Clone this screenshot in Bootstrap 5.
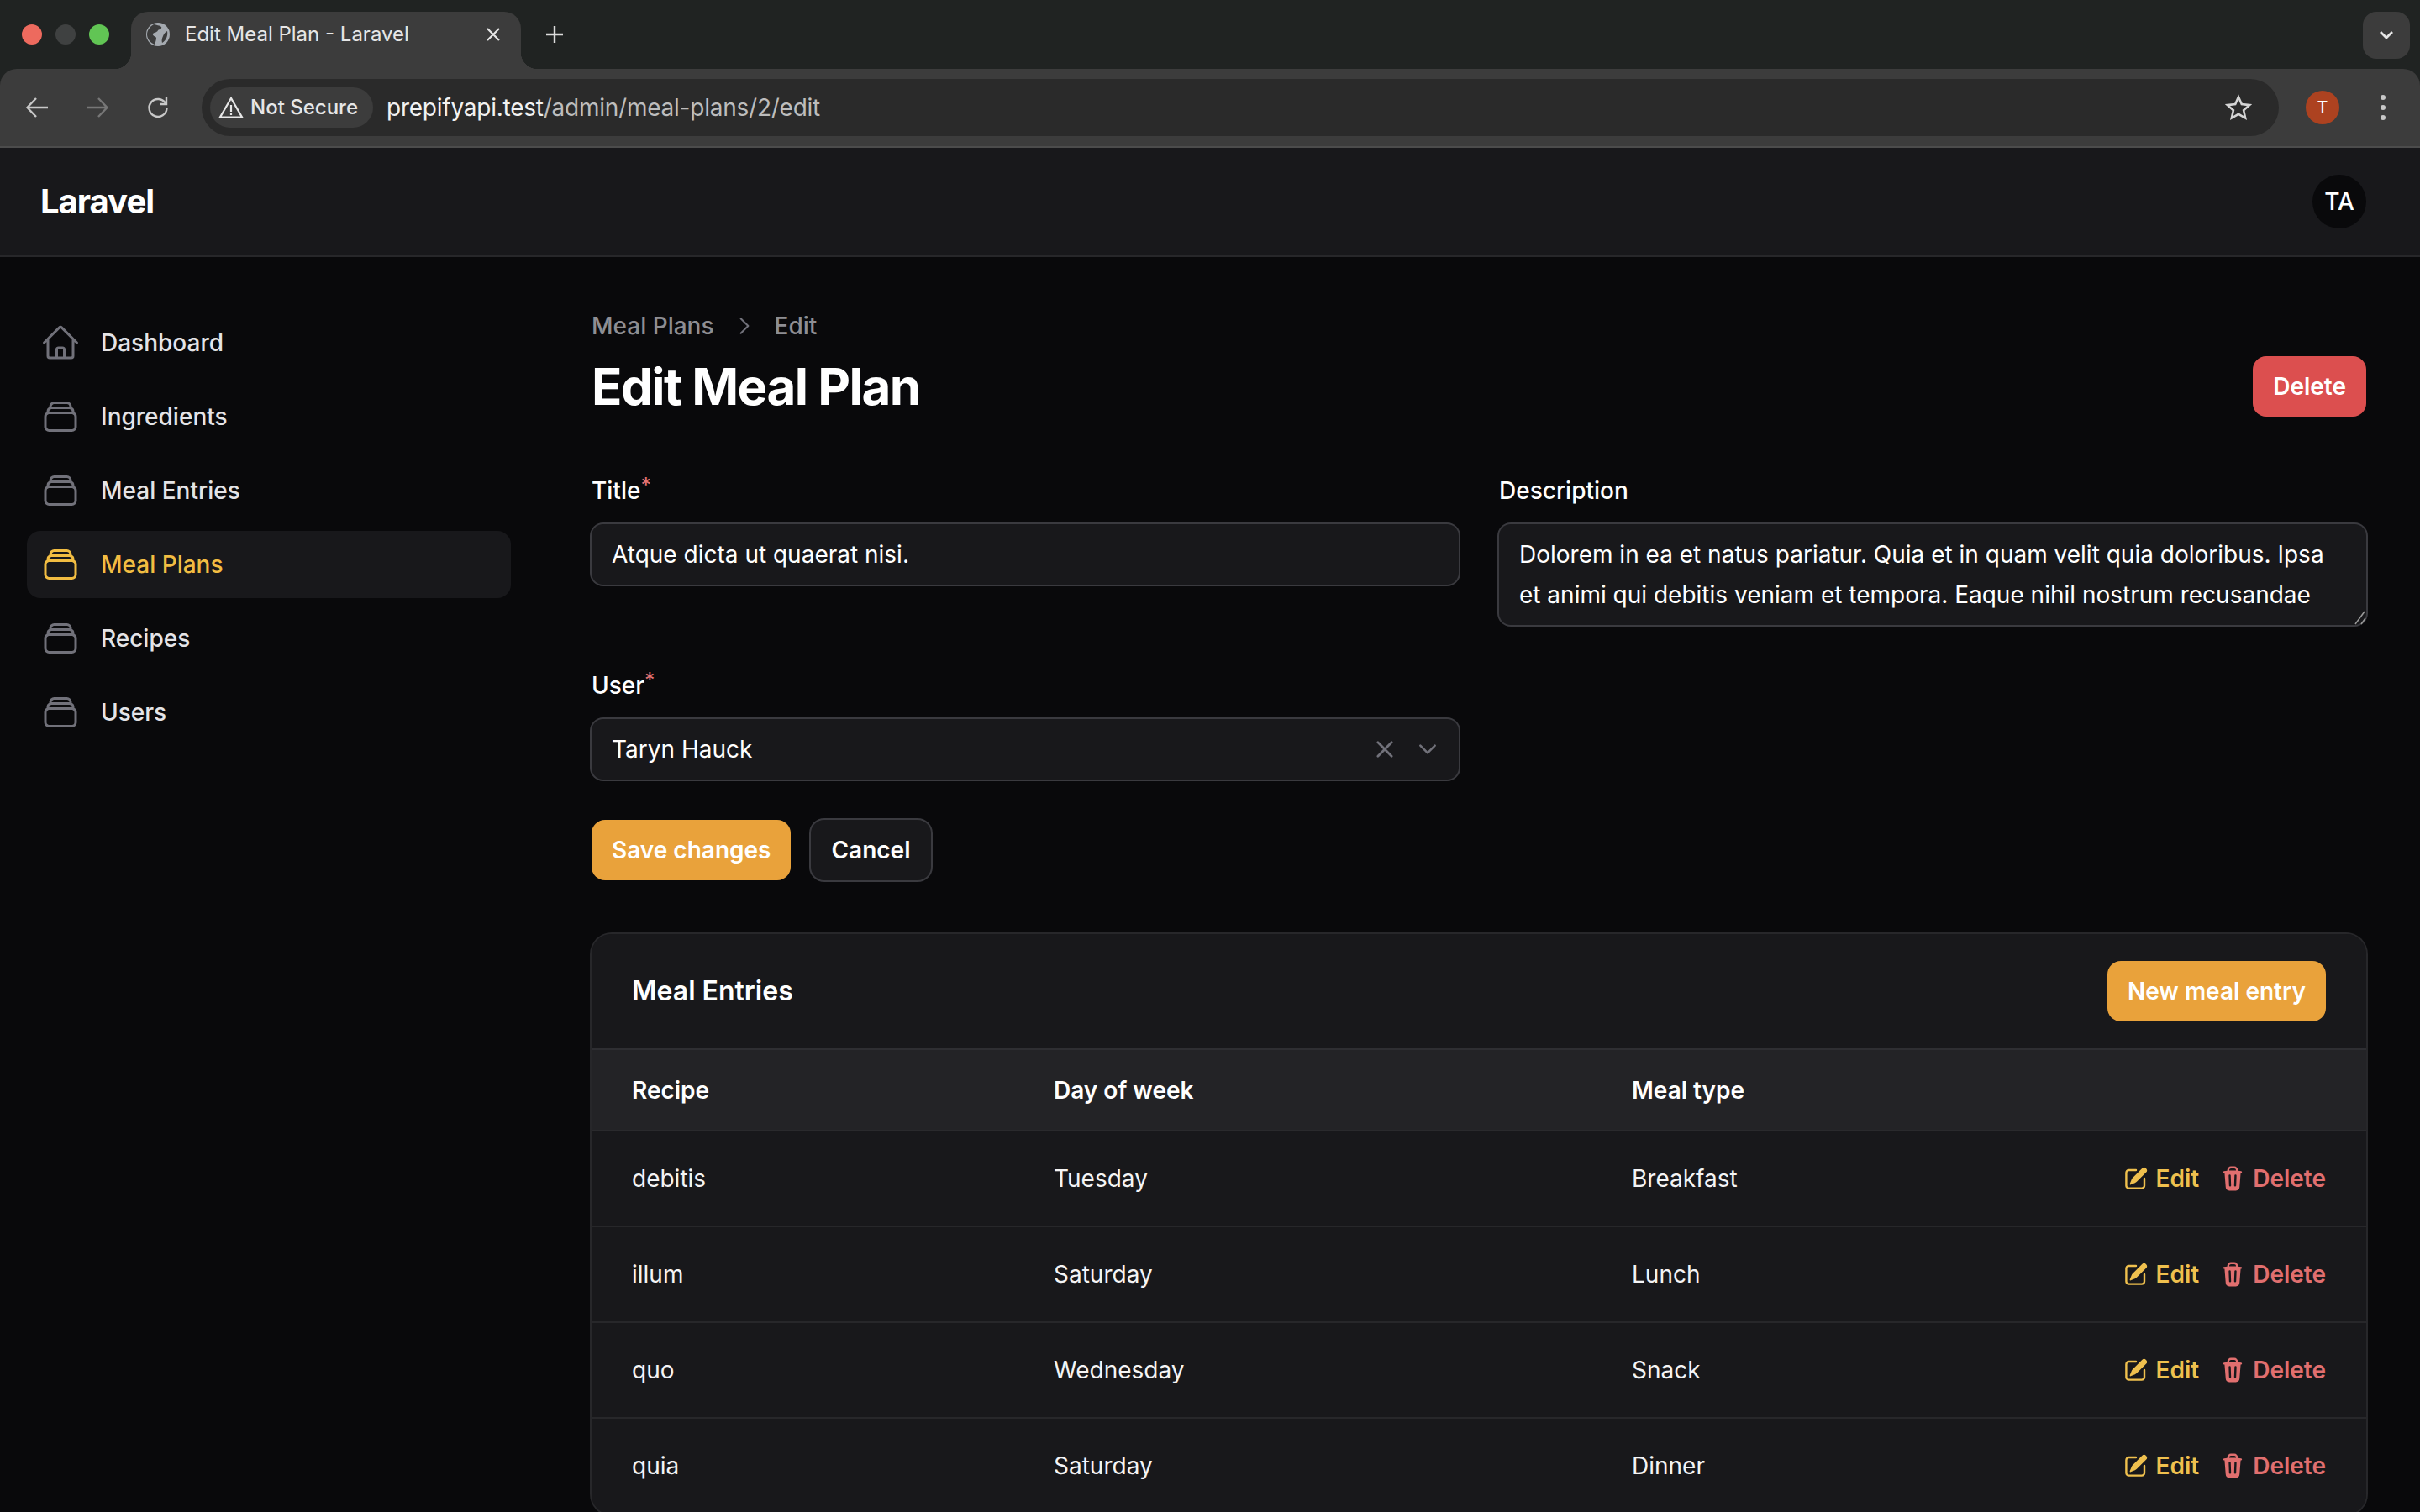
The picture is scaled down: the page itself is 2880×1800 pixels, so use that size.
<!DOCTYPE html>
<html lang="en" data-bs-theme="dark">
<head>
    <meta charset="UTF-8">
    <meta name="viewport" content="width=device-width, initial-scale=1.0">
    <title>Edit Meal Plan - Laravel</title>
    <link href="https://cdn.jsdelivr.net/npm/bootstrap@5.3.0/dist/css/bootstrap.min.css" rel="stylesheet">
    <style>
        html, body { height: 1800px; overflow: hidden; }
        body { background: #09090b; color: #fff; font-family: Inter, "Liberation Sans", sans-serif; font-size: 28px; line-height: 40px; color-scheme: dark; }

        /* browser chrome */
        .tab-strip { height: 82px; background: #202322; padding-left: 156px; }
        .win-lights { gap: 16px; left: 26px; top: 29px; }
        .win-dot { width: 24px; height: 24px; border-radius: 50%; }
        .browser-tab { width: 464px; height: 68px; margin-top: 14px; background: #3c3c3c; border-radius: 20px 20px 0 0; padding: 0 24px 14px 18px; font-size: 24px; color: #e6e6e6; }
        .browser-tab::before, .browser-tab::after { content: ""; position: absolute; bottom: 0; width: 20px; height: 20px; }
        .browser-tab::before { left: -20px; background: radial-gradient(circle at 0 0, #202322 20px, #3c3c3c 20.5px); }
        .browser-tab::after { right: -20px; background: radial-gradient(circle at 100% 0, #202322 20px, #3c3c3c 20.5px); }
        .tab-name { margin-left: 18px; }
        .new-tab { margin: 14px 0 0 28px; height: 54px; }
        .tab-menu { width: 56px; height: 56px; right: 12px; top: 14px; background: #3c3c3c; border-radius: 16px; }
        .tool-bar { height: 94px; background: #3c3c3c; border-radius: 20px 20px 0 0; border-bottom: 2px solid #4c4c4c; padding: 12px 0 0 30px; }
        .strip-wrap { background: #202322; }
        .tool-btn { width: 32px; height: 68px; margin-right: 40px; }
        .address-bar { width: 2472px; height: 68px; margin-left: -6px; background: #2a2a2a; border-radius: 34px; padding: 0 32px 0 10px; }
        .secure-pill { height: 48px; background: #3c3c3c; border-radius: 24px; padding: 0 18px 0 10px; font-size: 24px; font-weight: 500; color: #e6e6e6; }
        .url-host { color: #f2f2f2; }
        .url-path { color: #bdbdbd; }
        .url-text { font-size: 28px; letter-spacing: -0.24px; margin-left: 16px; }
        .profile-dot { width: 40px; height: 40px; border-radius: 50%; background: #ad4220; color: #fff; font-size: 20px; margin: 0 0 12px 32px; }
        .menu-dots { margin: 0 0 12px 48px; }

        /* app header */
        .app-top { height: 130px; background: #18181b; border-bottom: 2px solid #27272a; padding: 0 64px 0 48px; }
        .app-brand { font-size: 40px; font-weight: 700; letter-spacing: -1px; color: #fff; padding: 0; margin: 0; }
        .user-chip { width: 64px; height: 64px; border-radius: 50%; background: #09090b; font-size: 28px; font-weight: 500; }

        /* sidebar */
        .side-col { width: 640px; padding: 62px 32px 0; flex: none; }
        .side-col .nav { gap: 8px; }
        .side-link { height: 80px; padding: 0 16px; gap: 24px; border-radius: 16px; color: #e4e4e7; font-weight: 500; }
        .side-link svg { color: #71717a; }
        .side-link.active-link { background: #18181b; color: #f2bd42; }
        .side-link.active-link svg { color: #f2bd42; }

        /* main */
        .main-col { width: 2240px; padding: 62px 64px 0; flex: none; }
        .crumbs { color: #8e8e93; font-weight: 500; gap: 22px; height: 40px; margin-bottom: 16px; }
        .page-title { font-size: 60px; line-height: 72px; font-weight: 700; letter-spacing: -1.5px; margin: 0; }
        .amber-btn, .red-btn, .plain-btn { height: 72px; border: 0; border-radius: 16px; font-size: 28px; font-weight: 600; color: #fff; padding: 0 24px; }
        .amber-btn, .amber-btn:hover { background: #e9a23b; color: #fff; }
        .red-btn, .red-btn:hover { background: #dc4f4f; color: #fff; }
        .plain-btn, .plain-btn:hover { background: #18181b; color: #fff; box-shadow: 0 0 0 2px #3a3a3f; padding: 0 24px; }
        .form-grid { --bs-gutter-x: 48px; --bs-gutter-y: 0; margin-top: 68px; }
        .field-label { display: block; height: 40px; margin-bottom: 20px; font-weight: 500; }
        .req-star { color: #e57373; font-size: 24px; vertical-align: 8px; line-height: 0; top: 0; }
        .form-control.dark-field, .form-control.dark-field:focus { background: #18181b; color: #fff; border: 0; border-radius: 14px; box-shadow: 0 0 0 2px #3a3a3f; font-size: 28px; line-height: 48px; height: 72px; padding: 12px 24px; }
        textarea.form-control.dark-field { height: 120px; min-height: 0; overflow: hidden; resize: none; }
        .area-wrap { height: 120px; }
        .resize-grip { right: 0; bottom: 0; }
        .user-field { margin-top: 100px; }
        .select-tools { gap: 24px; color: #71717a; }
        .form-actions { gap: 24px; margin-top: 48px; }

        /* table card */
        .entries-card { margin-top: 64px; --bs-card-bg: #18181b; --bs-card-border-width: 0; --bs-card-border-radius: 24px; --bs-card-inner-border-radius: 24px; box-shadow: 0 0 0 2px #27272a; overflow: hidden; }
        .entries-head { height: 138px; padding: 0 48px; background: #18181b; border-bottom: 2px solid #2e2e32; }
        .entries-title { font-size: 32px; font-weight: 600; margin: 0; }
        .entries-table { margin: 0; table-layout: fixed; --bs-table-bg: #18181b; --bs-table-color: #fff; --bs-table-border-color: #27272a; }
        .entries-table th { height: 96px; background: #232326; font-weight: 600; border-bottom: 2px solid #2a2a2d; vertical-align: middle; padding: 0 0 0 48px; }
        .entries-table td { height: 114px; vertical-align: middle; padding: 0 0 0 48px; border-bottom: 2px solid #27272a; color: #f4f4f5; }
        .col-recipe { width: 502px; }
        .col-day { width: 688px; }
        .col-type { width: 450px; }
        .entries-table td.row-actions { padding: 0 48px 0 0; }
        .row-link { gap: 8px; font-weight: 600; text-decoration: none; }
        .edit-link { color: #efc04e; }
        .del-link { color: #e16f6f; margin-left: 8px; }
        .link-group { gap: 16px; }
    </style>
</head>
<body>
    <div class="strip-wrap">
        <div class="tab-strip d-flex position-relative">
            <div class="win-lights d-flex position-absolute">
                <span class="win-dot" style="background:#ed6a5e"></span>
                <span class="win-dot" style="background:#3f4141"></span>
                <span class="win-dot" style="background:#61c554"></span>
            </div>
            <div class="browser-tab d-flex align-items-center position-relative">
                <svg width="28" height="28" viewBox="0 0 28 28" class="flex-shrink-0">
                    <circle cx="14" cy="14" r="14" fill="#a5aab0"/>
                    <path d="M9 2c3 1 7 1 9 3 1 2-2 3-4 4-1 3-4 2-6 4-1 3 3 3 4 5 0 3-1 5-2 8-5-2-9-7-9-12C1 9 5 4 9 2ZM25 10c1 5-1 11-6 14-1-3 0-6 1-8 1-3 3-5 5-6Z" fill="#3c3c3c"/>
                </svg>
                <span class="tab-name flex-grow-1">Edit Meal Plan - Laravel</span>
                <svg width="18" height="18" viewBox="0 0 18 18" fill="none" stroke="#e6e6e6" stroke-width="2.2"><path d="M2 2l14 14M16 2L2 16"/></svg>
            </div>
            <div class="new-tab d-flex align-items-center">
                <svg width="24" height="24" viewBox="0 0 24 24" fill="none" stroke="#dcdcdc" stroke-width="2.4"><path d="M12 2v20M2 12h20"/></svg>
            </div>
            <div class="tab-menu position-absolute d-flex align-items-center justify-content-center">
                <svg width="18" height="12" viewBox="0 0 18 12" fill="none" stroke="#e6e6e6" stroke-width="2.8"><path d="M2 2l7 7 7-7"/></svg>
            </div>
        </div>
        <div class="tool-bar d-flex">
            <div class="tool-btn d-flex align-items-center">
                <svg width="28" height="28" viewBox="0 0 28 28" fill="none" stroke="#c8c8c8" stroke-width="2.4"><path d="M27 14H3M13 3L2.500 14 13 25"/></svg>
            </div>
            <div class="tool-btn d-flex align-items-center">
                <svg width="28" height="28" viewBox="0 0 28 28" fill="none" stroke="#777" stroke-width="2.4"><path d="M1 14h24M15 3l10.500 11L15 25"/></svg>
            </div>
            <div class="tool-btn d-flex align-items-center">
                <svg width="28" height="28" viewBox="0 0 28 28" fill="none" stroke="#c8c8c8" stroke-width="2.4"><path d="M23 9a10.500 10.500 0 1 0 1.500 6"/><path d="M24 2v8h-8"/></svg>
            </div>
            <div class="address-bar d-flex align-items-center">
                <div class="secure-pill d-flex align-items-center gap-2">
                    <svg width="30" height="28" viewBox="0 0 30 28" fill="none" stroke="#e6e6e6" stroke-width="2.200"><path d="M15 3L2 25.500h26L15 3Z"/><path d="M15 11v8M15 20.500v2.500"/></svg>
                    <span>Not Secure</span>
                </div>
                <div class="url-text flex-grow-1"><span class="url-host">prepifyapi.test</span><span class="url-path">/admin/meal-plans/2/edit</span></div>
                <svg width="32" height="32" viewBox="0 0 32 32" fill="none" stroke="#d4d4d4" stroke-width="2.600"><path d="M16 3.500l3.800 8.600 9.300 1-7 6.200 2 9.200-8.100-4.700-8.100 4.700 2-9.200-7-6.200 9.300-1Z"/></svg>
            </div>
            <div class="profile-dot d-flex align-items-center justify-content-center align-self-center">T</div>
            <div class="menu-dots align-self-center d-flex">
                <svg width="8" height="36" viewBox="0 0 8 36" fill="#c8c8c8"><circle cx="4" cy="6" r="3"/><circle cx="4" cy="18" r="3"/><circle cx="4" cy="30" r="3"/></svg>
            </div>
        </div>
    </div>

    <nav class="navbar app-top d-flex justify-content-between align-items-center">
        <a class="navbar-brand app-brand" href="#">Laravel</a>
        <div class="user-chip d-flex align-items-center justify-content-center">TA</div>
    </nav>

    <svg width="0" height="0" class="d-block">
        <defs>
            <symbol id="stack" viewBox="0 0 24 24"><path fill="none" stroke="currentColor" stroke-width="1.500" stroke-linecap="round" stroke-linejoin="round" d="M6 6.878V6a2.250 2.250 0 0 1 2.250-2.250h7.500A2.250 2.250 0 0 1 18 6v.878m-12 0c.235-.083.487-.128.750-.128h10.500c.263 0 .515.045.750.128m-12 0A2.250 2.250 0 0 0 4.500 9v.878m13.500-3A2.250 2.250 0 0 1 19.500 9v.878m0 0a2.246 2.246 0 0 0-.750-.128H5.250c-.263 0-.515.045-.750.128m15 0A2.250 2.250 0 0 1 21 12v6a2.250 2.250 0 0 1-2.250 2.250H5.250A2.250 2.250 0 0 1 3 18v-6c0-.980.626-1.813 1.500-2.122"/></symbol>
            <symbol id="pencil" viewBox="0 0 20 20"><path fill="currentColor" d="m5.433 13.917 1.262-3.155A4 4 0 0 1 7.580 9.420l6.920-6.918a2.121 2.121 0 0 1 3 3l-6.920 6.918c-.383.383-.840.685-1.343.886l-3.154 1.262a.5.5 0 0 1-.650-.650Z"/><path fill="currentColor" d="M3.500 5.750c0-.690.560-1.250 1.250-1.250H10A.750.750 0 0 0 10 3H4.750A2.750 2.750 0 0 0 2 5.750v9.500A2.750 2.750 0 0 0 4.750 18h9.500A2.750 2.750 0 0 0 17 15.250V10a.750.750 0 0 0-1.500 0v5.250c0 .690-.560 1.250-1.250 1.250h-9.500c-.690 0-1.250-.560-1.250-1.250v-9.500Z"/></symbol>
            <symbol id="trash" viewBox="0 0 20 20"><path fill="currentColor" fill-rule="evenodd" d="M8.750 1A2.750 2.750 0 0 0 6 3.750v.443c-.795.077-1.584.176-2.365.298a.750.750 0 1 0 .230 1.482l.149-.022.841 10.518A2.750 2.750 0 0 0 7.596 19h4.807a2.750 2.750 0 0 0 2.742-2.530l.841-10.520.149.023a.750.750 0 0 0 .230-1.482A41.030 41.030 0 0 0 14 4.193V3.750A2.750 2.750 0 0 0 11.250 1h-2.500ZM10 4c.840 0 1.673.025 2.500.075V3.750c0-.690-.560-1.250-1.250-1.250h-2.500c-.690 0-1.250.560-1.250 1.250v.325C8.327 4.025 9.160 4 10 4ZM8.580 7.720a.750.750 0 0 0-1.500.060l.3 7.500a.750.750 0 1 0 1.500-.060l-.3-7.500Zm4.340.060a.750.750 0 1 0-1.500-.060l-.3 7.500a.750.750 0 1 0 1.500.060l.3-7.500Z" clip-rule="evenodd"/></symbol>
        </defs>
    </svg>

    <div class="d-flex">
        <aside class="side-col">
            <ul class="nav flex-column">
                <li class="nav-item"><a class="nav-link side-link d-flex align-items-center" href="#">
                    <svg width="48" height="48" viewBox="0 0 24 24" fill="none" stroke="currentColor" stroke-width="1.500" stroke-linecap="round" stroke-linejoin="round"><path d="m2.250 12 8.954-8.955c.440-.439 1.152-.439 1.591 0L21.750 12M4.500 9.750v10.125c0 .621.504 1.125 1.125 1.125H9.750v-4.875c0-.621.504-1.125 1.125-1.125h2.250c.621 0 1.125.504 1.125 1.125V21h4.125c.621 0 1.125-.504 1.125-1.125V9.750M8.250 21h8.250"/></svg>
                    Dashboard</a></li>
                <li class="nav-item"><a class="nav-link side-link d-flex align-items-center" href="#"><svg width="48" height="48"><use href="#stack"/></svg>Ingredients</a></li>
                <li class="nav-item"><a class="nav-link side-link d-flex align-items-center" href="#"><svg width="48" height="48"><use href="#stack"/></svg>Meal Entries</a></li>
                <li class="nav-item"><a class="nav-link side-link active-link d-flex align-items-center" href="#"><svg width="48" height="48"><use href="#stack"/></svg>Meal Plans</a></li>
                <li class="nav-item"><a class="nav-link side-link d-flex align-items-center" href="#"><svg width="48" height="48"><use href="#stack"/></svg>Recipes</a></li>
                <li class="nav-item"><a class="nav-link side-link d-flex align-items-center" href="#"><svg width="48" height="48"><use href="#stack"/></svg>Users</a></li>
            </ul>
        </aside>

        <main class="main-col">
            <div class="crumbs d-flex align-items-center">
                <span>Meal Plans</span>
                <svg width="28" height="28" viewBox="0 0 24 24" fill="none" stroke="#71717a" stroke-width="1.800" stroke-linecap="round" stroke-linejoin="round"><path d="m8.250 4.500 7.500 7.500-7.500 7.500"/></svg>
                <span>Edit</span>
            </div>
            <div class="d-flex justify-content-between align-items-center">
                <h1 class="page-title">Edit Meal Plan</h1>
                <button class="btn red-btn">Delete</button>
            </div>

            <div class="row form-grid">
                <div class="col-6">
                    <label class="field-label">Title<sup class="req-star">*</sup></label>
                    <input class="form-control dark-field" value="Atque dicta ut quaerat nisi.">
                    <div class="user-field">
                        <label class="field-label">User<sup class="req-star">*</sup></label>
                        <div class="form-control dark-field d-flex align-items-center justify-content-between">
                            <span>Taryn Hauck</span>
                            <span class="select-tools d-flex align-items-center">
                                <svg width="28" height="28" viewBox="0 0 24 24" fill="none" stroke="currentColor" stroke-width="2.400" stroke-linecap="round"><path d="M5 5l14 14M19 5L5 19"/></svg>
                                <svg width="26" height="26" viewBox="0 0 24 24" fill="none" stroke="currentColor" stroke-width="2.400" stroke-linecap="round" stroke-linejoin="round"><path d="m4 8 8 8 8-8"/></svg>
                            </span>
                        </div>
                    </div>
                </div>
                <div class="col-6">
                    <label class="field-label">Description</label>
                    <div class="area-wrap position-relative">
                        <textarea class="form-control dark-field">Dolorem in ea et natus pariatur. Quia et in quam velit quia doloribus. Ipsa et animi qui debitis veniam et tempora. Eaque nihil nostrum recusandae</textarea>
                        <svg class="resize-grip position-absolute" width="16" height="18" viewBox="0 0 16 18" fill="none" stroke="#9a9a9a" stroke-width="1.500"><path d="M14 2L3 17M15 10l-5 7"/></svg>
                    </div>
                </div>
            </div>

            <div class="form-actions d-flex">
                <button class="btn amber-btn">Save changes</button>
                <button class="btn plain-btn">Cancel</button>
            </div>

            <div class="card entries-card">
                <div class="entries-head d-flex justify-content-between align-items-center">
                    <h2 class="entries-title">Meal Entries</h2>
                    <button class="btn amber-btn">New meal entry</button>
                </div>
                <table class="table entries-table">
                    <colgroup><col class="col-recipe"><col class="col-day"><col class="col-type"><col></colgroup>
                    <thead>
                        <tr><th>Recipe</th><th>Day of week</th><th>Meal type</th><th></th></tr>
                    </thead>
                    <tbody>
                        <tr><td>debitis</td><td>Tuesday</td><td>Breakfast</td><td class="row-actions"><div class="link-group d-flex justify-content-end">
                            <a class="row-link edit-link d-flex align-items-center" href="#"><svg width="32" height="32"><use href="#pencil"/></svg>Edit</a>
                            <a class="row-link del-link d-flex align-items-center" href="#"><svg width="32" height="32"><use href="#trash"/></svg>Delete</a></div></td></tr>
                        <tr><td>illum</td><td>Saturday</td><td>Lunch</td><td class="row-actions"><div class="link-group d-flex justify-content-end">
                            <a class="row-link edit-link d-flex align-items-center" href="#"><svg width="32" height="32"><use href="#pencil"/></svg>Edit</a>
                            <a class="row-link del-link d-flex align-items-center" href="#"><svg width="32" height="32"><use href="#trash"/></svg>Delete</a></div></td></tr>
                        <tr><td>quo</td><td>Wednesday</td><td>Snack</td><td class="row-actions"><div class="link-group d-flex justify-content-end">
                            <a class="row-link edit-link d-flex align-items-center" href="#"><svg width="32" height="32"><use href="#pencil"/></svg>Edit</a>
                            <a class="row-link del-link d-flex align-items-center" href="#"><svg width="32" height="32"><use href="#trash"/></svg>Delete</a></div></td></tr>
                        <tr><td>quia</td><td>Saturday</td><td>Dinner</td><td class="row-actions"><div class="link-group d-flex justify-content-end">
                            <a class="row-link edit-link d-flex align-items-center" href="#"><svg width="32" height="32"><use href="#pencil"/></svg>Edit</a>
                            <a class="row-link del-link d-flex align-items-center" href="#"><svg width="32" height="32"><use href="#trash"/></svg>Delete</a></div></td></tr>
                    </tbody>
                </table>
            </div>
        </main>
    </div>
    <script src="https://cdn.jsdelivr.net/npm/bootstrap@5.3.0/dist/js/bootstrap.bundle.min.js"></script>
</body>
</html>
